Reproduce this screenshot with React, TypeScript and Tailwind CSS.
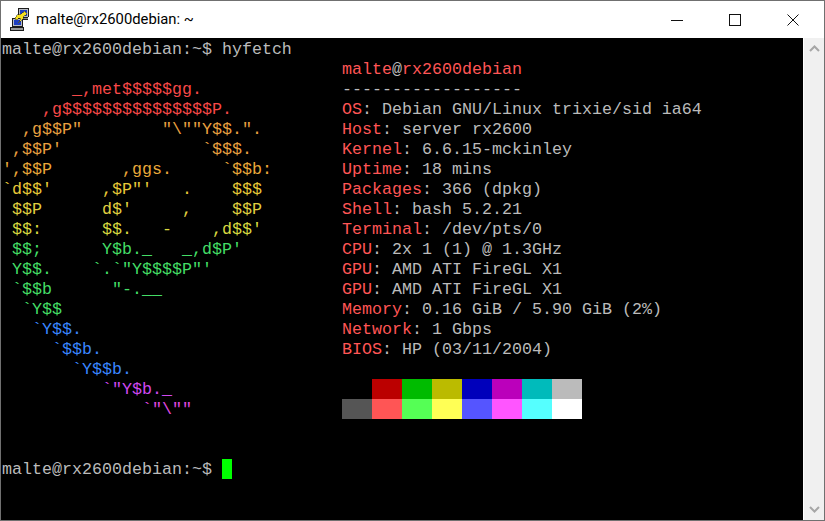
const logo: [string, string][] = [
  ['       _,met$$$$$gg.', 'text-[#f84848]'],
  ['    ,g$$$$$$$$$$$$$$$P.', 'text-[#f84848]'],
  ['  ,g$$P"        "\\""Y$$.".', 'text-[#eaa040]'],
  [" ,$$P'              `$$$.", 'text-[#eaa040]'],
  ["',$$P       ,ggs.     `$$b:", 'text-[#eaa83a]'],
  ["`d$$'     ,$P\"'   .    $$$", 'text-[#e8c838]'],
  [" $$P      d$'     ,    $$P", 'text-[#e0d040]'],
  [" $$:      $$.   -    ,d$$'", 'text-[#d8d840]'],
  [" $$;      Y$b._   _,d$P'", 'text-[#44dd66]'],
  [' Y$$.    `.`"Y$$$$P"\'', 'text-[#44dd66]'],
  [' `$$b      "-.__', 'text-[#44dd66]'],
  ['  `Y$$', 'text-[#44dd66]'],
  ['   `Y$$.', 'text-[#3a86ff]'],
  ['     `$$b.', 'text-[#3a86ff]'],
  ['       `Y$$b.', 'text-[#3a86ff]'],
  ['          `"Y$b._', 'text-[#d048f0]'],
  ['              `"\\""', 'text-[#e048e0]'],
];

const info: [string, string][] = [
  ['OS', 'Debian GNU/Linux trixie/sid ia64'],
  ['Host', 'server rx2600'],
  ['Kernel', '6.6.15-mckinley'],
  ['Uptime', '18 mins'],
  ['Packages', '366 (dpkg)'],
  ['Shell', 'bash 5.2.21'],
  ['Terminal', '/dev/pts/0'],
  ['CPU', '2x 1 (1) @ 1.3GHz'],
  ['GPU', 'AMD ATI FireGL X1'],
  ['GPU', 'AMD ATI FireGL X1'],
  ['Memory', '0.16 GiB / 5.90 GiB (2%)'],
  ['Network', '1 Gbps'],
  ['BIOS', 'HP (03/11/2004)'],
];

const darkColors = ['bg-black', 'bg-[#bb0000]', 'bg-[#00bb00]', 'bg-[#bbbb00]', 'bg-[#0000bb]', 'bg-[#bb00bb]', 'bg-[#00bbbb]', 'bg-[#bbbbbb]'];
const lightColors = ['bg-[#555555]', 'bg-[#ff5555]', 'bg-[#55ff55]', 'bg-[#ffff55]', 'bg-[#5555ff]', 'bg-[#ff55ff]', 'bg-[#55ffff]', 'bg-white'];

function PuttyIcon() {
  return (
    <svg width="20" height="24" viewBox="0 0 20 24" shapeRendering="crispEdges">
      {/* back monitor */}
      <path d="M8 0h11v9h-1v3H8z" fill="#1c1c1c" />
      <path d="M9 1h9v8H9z" fill="#b8bcc4" />
      <path d="M10 2h7v6h-7z" fill="#1f3fc0" />
      <path d="M9 10h9v1H9z" fill="#8a8a8a" />
      {/* front monitor */}
      <path d="M2 10h11v9h1v4H0v-4h2z" fill="#1c1c1c" />
      <path d="M3 11h9v7H3z" fill="#b8bcc4" />
      <path d="M4 12h7v5H4z" fill="#1f3fc0" />
      <path d="M1 20h12v2H1z" fill="#9a9a9a" />
      {/* lightning */}
      <path d="M15 3l-4 3-4 1-2 3 1 2 3-2 2 1-3 4 5-4 1-3 3-2z" fill="#f5e020" stroke="#2a2a2a" strokeWidth="0.5" />
    </svg>
  );
}

export default function App() {
  return (
    <div className="w-[825px] h-[521px] flex flex-col bg-white border border-[#707070] overflow-hidden">
      {/* Title bar */}
      <div className="h-[37px] shrink-0 flex items-center bg-white">
        <div className="ml-[9px] mt-[1px] flex">
          <PuttyIcon />
        </div>
        <span className="ml-[6px] text-[14.8px] leading-none text-black font-['Roboto',sans-serif]">malte@rx2600debian: ~</span>
        <div className="ml-auto mr-[2px] flex h-full">
          <div className="w-[56px] flex items-center justify-center">
            <svg width="12" height="12" viewBox="0 0 12 12"><path d="M0 6.5h12" stroke="#111" strokeWidth="1" /></svg>
          </div>
          <div className="w-[59px] flex items-center justify-center">
            <svg width="12" height="12" viewBox="0 0 12 12"><rect x="0.5" y="0.5" width="11" height="11" fill="none" stroke="#111" strokeWidth="1" /></svg>
          </div>
          <div className="w-[58px] flex items-center justify-center">
            <svg width="12" height="12" viewBox="0 0 12 12"><path d="M0.5 0.5l11 11M11.5 0.5l-11 11" stroke="#111" strokeWidth="1" /></svg>
          </div>
        </div>
      </div>

      <div className="flex-1 flex min-h-0">
        {/* Terminal */}
        <div className="w-[802px] bg-black pl-[1px] pt-[1px] text-[#bbbbbb] font-['Liberation_Mono',monospace] text-[16.67px] leading-[22px] whitespace-pre">
          <div className="h-5">malte@rx2600debian:~$ hyfetch</div>
          <div className="flex">
            <div className="w-[340px] pt-5">
              {logo.map(([line, color], i) => (
                <div key={i} className={`h-5 ${color}`}>{line}</div>
              ))}
            </div>
            <div>
              <div className="h-5">
                <span className="text-[#ff5555]">malte</span>@<span className="text-[#ff5555]">rx2600debian</span>
              </div>
              <div className="h-5">------------------</div>
              {info.map(([label, value], i) => (
                <div key={i} className="h-5">
                  <span className="text-[#ff5555]">{label}</span>: {value}
                </div>
              ))}
              <div className="mt-5 flex">
                {darkColors.map((c) => (
                  <div key={c} className={`w-[30px] h-5 ${c}`} />
                ))}
              </div>
              <div className="flex">
                {lightColors.map((c) => (
                  <div key={c} className={`w-[30px] h-5 ${c}`} />
                ))}
              </div>
            </div>
          </div>
          <div className="mt-10 flex h-5">
            <span>malte@rx2600debian:~$ </span>
            <span className="w-[10px] h-5 bg-[#00ff00]" />
          </div>
        </div>

        {/* Scrollbar */}
        <div className="flex-1 border-l border-white bg-[#f0f0f0] flex flex-col justify-between items-center pt-[7px] pb-[7px]">
          <svg width="11" height="7" viewBox="0 0 11 7"><path d="M1 6l4.5-4.5L10 6" fill="none" stroke="#a6a6a6" strokeWidth="2" /></svg>
          <svg width="11" height="7" viewBox="0 0 11 7"><path d="M1 1l4.5 4.5L10 1" fill="none" stroke="#a6a6a6" strokeWidth="2" /></svg>
        </div>
      </div>
    </div>
  );
}
